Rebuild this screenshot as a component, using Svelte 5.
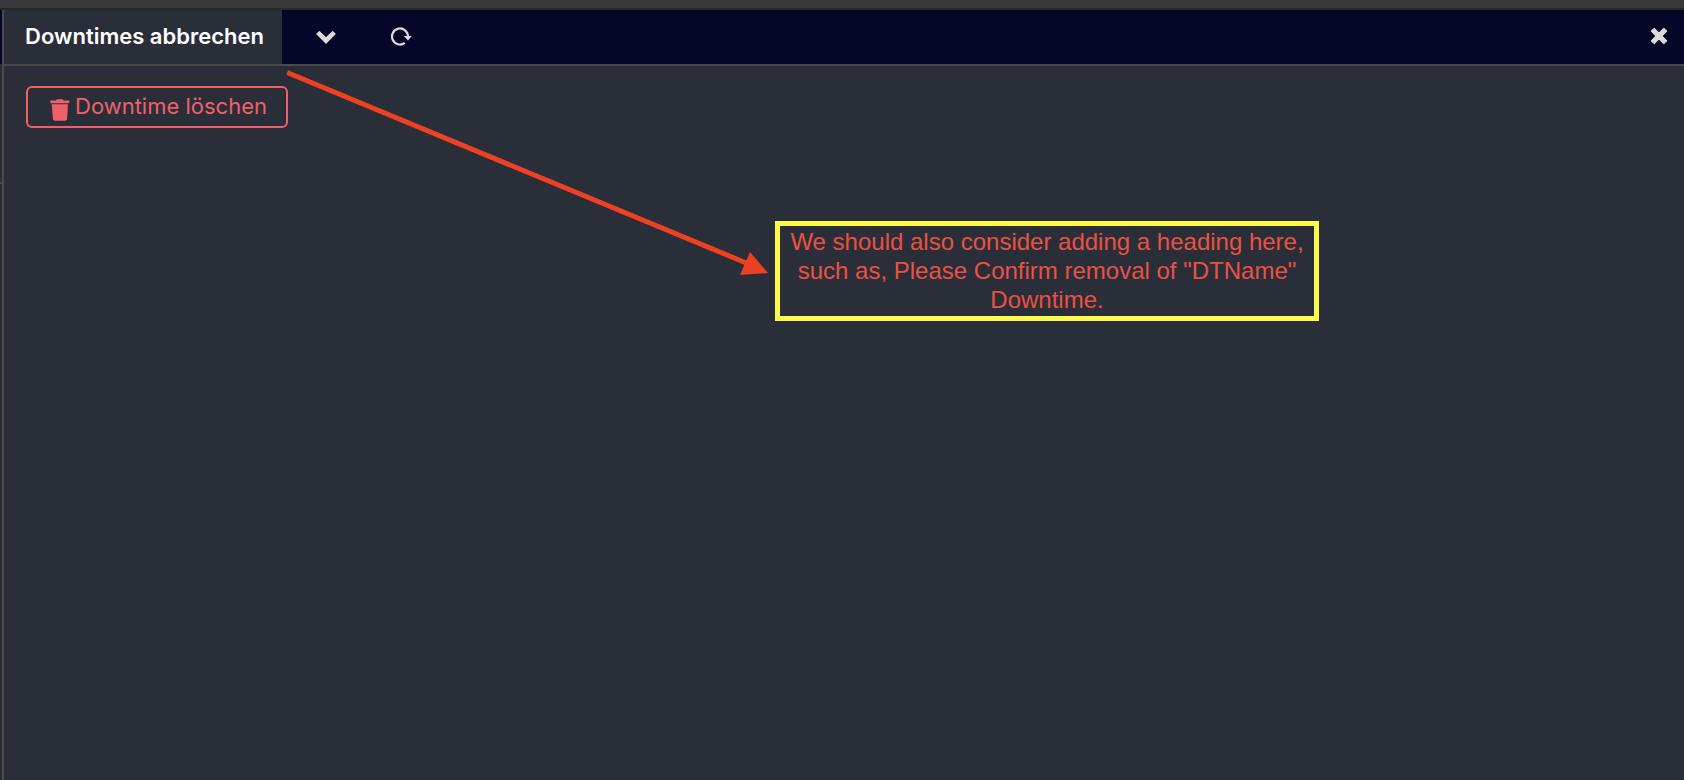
<script>
  let selected = $state('Downtimes abbrechen');
</script>

<div class="page">
  <div class="strip"></div>
  <div class="shell">
    <div class="rail">
      <div class="rail-head"></div>
      <div class="rail-row"></div>
    </div>
    <main class="column">
      <nav class="tabs" aria-label="Tabs">
        <a class="tab" href="#downtime">{selected}</a>
        <button class="icon-button" type="button" aria-label="Tab menu">
          <svg width="20" height="14" viewBox="0 0 20 14">
            <path d="M3.4 1.6 L10 7.9 L16.6 1.6 L19 4 L10 13.2 L1 4 Z" fill="currentColor" stroke="currentColor" stroke-width="1.2" stroke-linejoin="round" />
          </svg>
        </button>
        <button class="icon-button refresh" type="button" aria-label="Reload">
          <svg width="22" height="20" viewBox="0 0 22 20">
            <path d="M13.8 15.9 A8 8 0 1 1 17 9.5" fill="none" stroke="currentColor" stroke-width="2.2" />
            <path d="M12.8 9 H20.8 L17 13.6 Z" fill="currentColor" />
          </svg>
        </button>
        <button class="icon-button close" type="button" aria-label="Close">
          <svg width="18" height="18" viewBox="0 0 18 18">
            <path d="M4.2 1.4 L9 6.2 L13.8 1.4 L16.6 4.2 L11.8 9 L16.6 13.8 L13.8 16.6 L9 11.8 L4.2 16.6 L1.4 13.8 L6.2 9 L1.4 4.2 Z" fill="currentColor" stroke="currentColor" stroke-width="1.2" stroke-linejoin="round" />
          </svg>
        </button>
      </nav>
      <section class="content">
        <button class="delete" type="button">
          <svg width="20" height="22" viewBox="0 0 20 22">
            <path d="M0.3 1.4 H5.8 L7 0.2 H12.6 L13.8 1.4 H19.2 V4.2 H0.3 Z M1.7 5.2 H17.9 L17.1 20 Q17 21.8 15.3 21.8 H4.7 Q3 21.8 2.9 20 Z" fill="currentColor" />
          </svg>
          <span>Downtime löschen</span>
        </button>
      </section>
    </main>
  </div>

  <svg class="arrow" width="484" height="208" viewBox="0 0 484 208" aria-hidden="true">
    <path d="M1.2 2.5 L464 194.5" stroke="#ee4023" stroke-width="5" />
    <path d="M482 203 L464 182 L454 205 Z" fill="#ee4023" />
  </svg>
  <p class="note">We should also consider adding a heading here, such as, Please Confirm removal of "DTName" Downtime.</p>
</div>

<style>
  :global(body) {
    margin: 0;
    background: #2a2e38;
  }

  .page {
    position: relative;
    display: flex;
    flex-direction: column;
    min-height: 100vh;
    overflow: hidden;
    background: #2a2e38;
    font-family: Inter, "Liberation Sans", sans-serif;
  }

  .strip {
    height: 8px;
    background: #38393b;
    border-bottom: 2px solid #282828;
  }

  .shell {
    display: flex;
    flex: 1;
  }

  .rail {
    width: 2px;
    border-right: 2px solid #4a4a4a;
  }

  .rail-head {
    height: 54px;
    background: #060629;
  }

  .rail-row {
    height: 118px;
    border-bottom: 2px solid #4a4a4a;
  }

  .column {
    flex: 1;
  }

  .tabs {
    display: flex;
    height: 54px;
    background: #060629;
    border-bottom: 2px solid #4a4a4a;
  }

  .tab {
    display: flex;
    align-items: center;
    padding: 0 18px 2px 21px;
    background: #2a2e38;
    color: #fff;
    font-size: 22px;
    font-weight: 600;
    line-height: 32px;
    text-decoration: none;
    white-space: nowrap;
  }

  button {
    margin: 0;
    background: none;
    font-family: inherit;
    cursor: pointer;
  }

  .icon-button {
    display: flex;
    align-items: center;
    padding: 0 34px;
    border: 0;
    color: #dbdbdb;
  }

  .refresh {
    padding: 0 20px 0 21px;
  }

  .close {
    margin-left: auto;
    padding: 0 16px 2px;
  }

  .content {
    padding: 20px 22px;
  }

  .delete {
    display: flex;
    align-items: center;
    gap: 5px;
    height: 42px;
    padding: 0 19px 0 22px;
    border: 2px solid #ef6069;
    border-radius: 6px;
    color: #ef6069;
    font-size: 22px;
    line-height: 32px;
  }

  .delete svg {
    margin-top: 6px;
  }

  .delete span {
    padding-bottom: 2px;
  }

  .arrow {
    position: absolute;
    left: 286px;
    top: 70px;
  }

  .note {
    position: absolute;
    left: 775px;
    top: 221px;
    box-sizing: border-box;
    width: 544px;
    margin: 0;
    padding: 1px 4px 2px;
    border: 5px solid #fffa48;
    color: #ea5143;
    font-family: "Liberation Sans", sans-serif;
    font-size: 24px;
    line-height: 29px;
    text-align: center;
  }
</style>
